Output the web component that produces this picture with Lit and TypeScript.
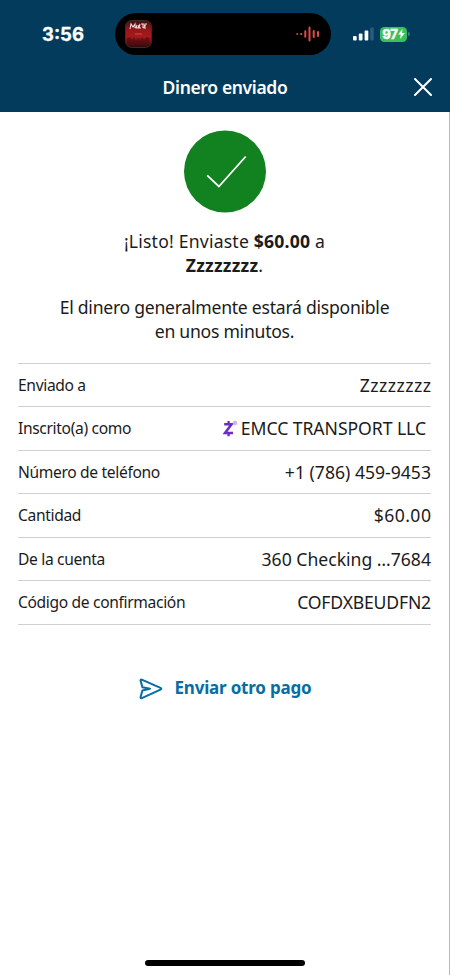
import { LitElement, html, css, svg } from "lit";
import { customElement, property } from "lit/decorators.js";

@customElement("status-bar")
export class StatusBar extends LitElement {
	static styles = css`
		:host {
			display: grid;
			grid-template-columns: 115px 216px 1fr;
			height: 42px;
			padding-top: 13px;
			color: #fff;
			font-family: Inter, "Liberation Sans", sans-serif;
		}

		.time {
			padding-left: 42px;
			line-height: 42px;
			font-size: 18.5px;
			font-weight: 700;
			-webkit-text-stroke: 0.3px #fff;
		}

		.island {
			display: flex;
			align-items: center;
			justify-content: space-between;
			box-sizing: border-box;
			padding: 0 11px 0 10px;
			border-radius: 21px;
			background: #000;
		}

		.status {
			display: flex;
			align-items: center;
			padding-left: 22px;
		}

		.battery {
			display: flex;
			align-items: center;
			justify-content: center;
			width: 27px;
			height: 15px;
			margin-left: 6px;
			border-radius: 4.5px;
			background: #3ac15c;
			font-size: 13px;
			font-weight: 800;
			letter-spacing: -0.3px;
			-webkit-text-stroke: 0.3px #fff;
		}

		.tip {
			width: 1.5px;
			height: 4px;
			margin-left: 1px;
			border-radius: 0 2px 2px 0;
			background: #48718b;
		}

		svg {
			display: block;
		}
	`;

	render() {
		return html`
			<div class="time">3:56</div>
			<div class="island">
				<svg width="27" height="28" viewBox="0 0 27 28">
					<defs>
						<linearGradient id="cover" x1="0" y1="0" x2="0" y2="1">
							<stop offset="0" stop-color="#3c1215" />
							<stop offset="0.35" stop-color="#981619" />
							<stop offset="0.6" stop-color="#a8191b" />
							<stop offset="1" stop-color="#2a090b" />
						</linearGradient>
					</defs>
					<rect x="0.5" y="0.5" width="26" height="27" rx="6" fill="url(#cover)" stroke="#3d2a2d" />
					<path d="M2 25v-7l3-1 2 3 2-3 2 4 2-3 2 3 2-4 2 3 3-3 2 1v7z" fill="#4f0d10" opacity="0.65" />
					<path
						d="M5 9l1-5 2 3 2-3v4m2-3l-1 3h2l1-3m1-1l-1 4h2m0-4h3m-1 0v4m4-4h-2l-1 4h2m-1-2h1"
						fill="none"
						stroke="#eed9d6"
						stroke-width="1.1"
					/>
					<path d="M10 14h7" stroke="#df5c55" stroke-width="0.8" />
				</svg>
				<svg width="24" height="16" viewBox="0 0 24 16" fill="none" stroke="#e04a48" stroke-linecap="round">
					<path d="M1.2 8h.1M5 8h.4" stroke-width="1.8" />
					<path d="M9.3 5.2v5.6M13.5 1.5v13M17.7 5v6M22 6v4" stroke-width="2" />
				</svg>
			</div>
			<div class="status">
				<svg width="21" height="14" viewBox="0 0 21 14" fill="#fff">
					<rect x="0" y="9" width="3.7" height="4.6" rx="1" />
					<rect x="5.8" y="6.5" width="3.7" height="7.1" rx="1" />
					<rect x="11.6" y="3.5" width="3.7" height="10.1" rx="1" />
					<rect x="17.2" y="0.5" width="3.6" height="13.1" rx="1" fill="#2c5a79" />
				</svg>
				<div class="battery">
					97
					<svg width="7" height="10" viewBox="0 0 6 9"><path d="M3.8 0L0 5h2.3L1.8 9 6 3.7H3.5z" fill="#fff" /></svg>
				</div>
				<div class="tip"></div>
			</div>
		`;
	}
}

@customElement("detail-row")
export class DetailRow extends LitElement {
	static styles = css`
		:host {
			display: flex;
			align-items: flex-start;
			justify-content: space-between;
			box-sizing: border-box;
			height: 43.5px;
			padding-top: 9px;
			border-bottom: 1px solid #d0d0d0;
			line-height: 24px;
		}

		.label {
			font-size: 15.6px;
			letter-spacing: -0.34px;
		}

		.value {
			font-size: 17.6px;
		}

		/* Tracking variants */
		:host([tracking="wide"]) .value {
			margin-right: -0.4px;
			letter-spacing: 0.45px;
		}
		:host([tracking="tight"]) .value {
			letter-spacing: -0.18px;
		}
	`;

	@property() label = "";
	@property({ reflect: true }) tracking = "normal";

	render() {
		return html`
			<span class="label">${this.label}</span>
			<span class="value"><slot></slot></span>
		`;
	}
}

const zelleMark = svg`
	<path d="M2.2 4.2h7.4L3 13h8" stroke="#6a2bc9" stroke-width="2.5" />
	<path d="M6.6 1v3M6.6 13v3.2" stroke="#6a2bc9" stroke-width="2.3" />
	<circle cx="13" cy="3" r="1.9" fill="#eadcfa" stroke="#b899e6" stroke-width="0.7" />
	<path d="M12.6 4V2h.8v1h-.6l.7 1" stroke="#a47fdd" stroke-width="0.4" />
`;

@customElement("app-root")
export class AppRoot extends LitElement {
	static styles = css`
		:host {
			display: flex;
			flex-direction: column;
			box-sizing: border-box;
			height: 975px;
			background: #fff;
			color: #1b1b1b;
			font-family: "Noto Sans", "Open Sans", sans-serif;
		}

		header {
			height: 112px;
			background: #023b5b;
		}

		.nav {
			display: grid;
			grid-template-columns: 1fr auto 1fr;
			align-items: center;
			height: 24px;
			padding: 20px 18px 0;
			color: #fff;
		}

		.nav h1 {
			grid-column: 2;
			margin: 0;
			font-size: 17.5px;
			font-weight: 600;
			line-height: 24px;
			letter-spacing: -0.35px;
		}

		.nav svg {
			justify-self: end;
			margin: -1px 0 0;
		}

		main {
			flex: 1;
			display: flex;
			flex-direction: column;
			padding: 18px 18px 0;
			border-right: 1px solid #b9b9b9;
		}

		.check {
			display: block;
			align-self: center;
			margin-left: 1px;
		}

		.message {
			margin: 17px 0 0;
			text-align: center;
			font-size: 17.6px;
			line-height: 23.7px;
			letter-spacing: 0.2px;
		}

		.message.note {
			margin-top: 19px;
			letter-spacing: -0.26px;
		}

		.details {
			margin-top: 19px;
			border-top: 1px solid #d0d0d0;
		}

		.enrolled {
			padding-right: 5px;
			letter-spacing: -0.05px;
		}

		.enrolled svg {
			margin-right: 3px;
			vertical-align: -2px;
		}

		.again {
			display: flex;
			align-items: center;
			align-self: center;
			gap: 12px;
			margin-top: 51px;
			padding-left: 1px;
			color: #096da3;
			font-size: 17px;
			font-weight: 700;
			line-height: 24px;
			letter-spacing: -0.2px;
		}

		.again svg {
			margin-top: 2px;
		}

		.home {
			align-self: center;
			width: 160px;
			height: 6px;
			margin: auto 0 9px;
			border-radius: 3px;
			background: #000;
		}
	`;

	render() {
		return html`
			<header>
				<status-bar></status-bar>
				<div class="nav">
					<h1>Dinero enviado</h1>
					<svg width="18" height="18" viewBox="0 0 18 18">
						<path d="M1 1l16 16M17 1L1 17" stroke="#fff" stroke-width="2" stroke-linecap="round" />
					</svg>
				</div>
			</header>
			<main>
				<svg class="check" width="83" height="83" viewBox="0 0 83 83">
					<circle cx="41" cy="41.5" r="41" fill="#12811f" />
					<path d="M23.2 45.3l11.7 11.2L61.7 26.5" fill="none" stroke="#fff" stroke-width="1.8" />
				</svg>
				<p class="message">¡Listo! Enviaste <b>$60.00</b> a<br /><b>Zzzzzzzz</b>.</p>
				<p class="message note">El dinero generalmente estará disponible<br />en unos minutos.</p>

				<div class="details">
					<detail-row label="Enviado a" tracking="wide">Zzzzzzzz</detail-row>
					<detail-row label="Inscrito(a) como">
						<span class="enrolled"
							><svg width="16" height="17" viewBox="0 0 16 17" fill="none">${zelleMark}</svg>EMCC TRANSPORT LLC</span
						>
					</detail-row>
					<detail-row label="Número de teléfono">+1 (786) 459-9453</detail-row>
					<detail-row label="Cantidad" tracking="wide">$60.00</detail-row>
					<detail-row label="De la cuenta">360 Checking …7684</detail-row>
					<detail-row label="Código de confirmación" tracking="tight">COFDXBEUDFN2</detail-row>
				</div>

				<div class="again">
					<svg width="24" height="22" viewBox="0 0 24 22" fill="none" stroke="#096da3" stroke-width="2">
						<path
							d="M2.8 1.6L21.5 9.8q1.6.9 0 1.8L2.8 20.2q-1.5.4-1.2-1.2L3.4 12.4 11 10.8 3.4 9.2 1.6 2.8q-.3-1.6 1.2-1.2z"
							stroke-linejoin="round"
						/>
					</svg>
					<span>Enviar otro pago</span>
				</div>

				<div class="home"></div>
			</main>
		`;
	}
}
